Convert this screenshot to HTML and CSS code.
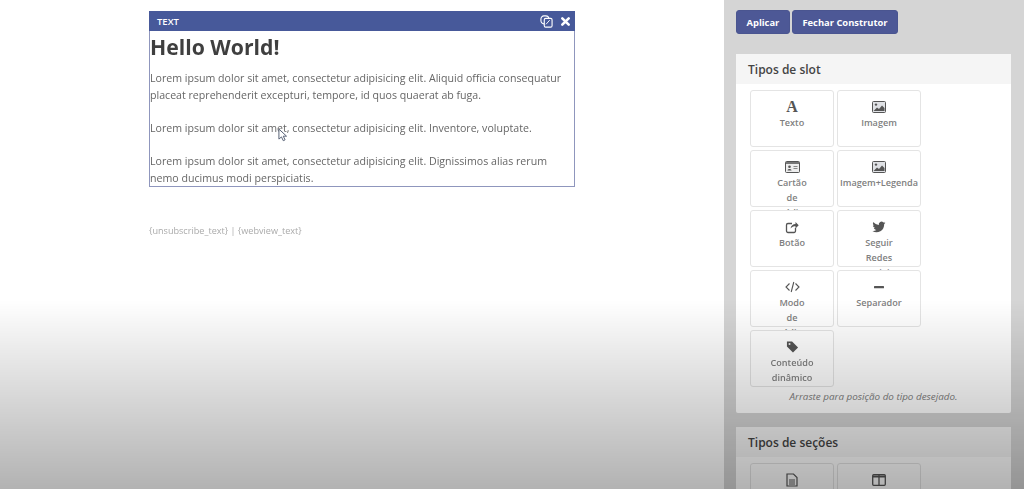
FILE: index.html
```html
<!DOCTYPE html>
<html lang="pt">
<head>
  <meta charset="UTF-8" />
  <title>Construtor de e-mail</title>
  <link rel="stylesheet" href="styles.css">
</head>
<body>

  <!-- Email canvas -->
  <main class="canvas">
    <div class="slot">
      <div class="slot-bar">
        <span class="slot-name">TEXT</span>
        <svg class="bar-icon" viewBox="0 0 14 14" width="13" height="13"><rect x="1" y="1" width="8.500" height="8.500" rx="3.200" fill="none" stroke="#fff" stroke-width="1.200"/><rect x="4.600" y="3.600" width="8.400" height="9.400" rx="1.500" fill="#47599a" stroke="#fff" stroke-width="1.200"/><path d="M6.500 10l4-4.500" stroke="#fff" stroke-width="1"/></svg>
        <svg class="bar-icon" viewBox="0 0 12 12" width="11" height="11"><path d="M2.500 2.500l7 7M9.500 2.500l-7 7" stroke="#fff" stroke-width="2.800" stroke-linecap="round"/></svg>
      </div>
      <div class="slot-body">
        <h1>Hello World!</h1>
        <p>Lorem ipsum dolor sit amet, consectetur adipisicing elit. Aliquid officia consequatur placeat reprehenderit excepturi, tempore, id quos quaerat ab fuga.</p>
        <p>Lorem ipsum dolor sit amet, consectetur adipisicing elit. Inventore, voluptate.</p>
        <p>Lorem ipsum dolor sit amet, consectetur adipisicing elit. Dignissimos alias rerum<br>nemo ducimus modi perspiciatis.</p>
      </div>
      <!-- Mouse pointer -->
      <svg class="pointer" viewBox="0 0 11 15" width="10" height="14"><path d="M1 1v11l2.800-2.400 2 4.200 2-1-2-4h3.600z" fill="#fff" stroke="#5a6478" stroke-width="1.100"/></svg>
    </div>
    <p class="email-links">{unsubscribe_text} | {webview_text}</p>
  </main>

  <!-- Builder sidebar -->
  <aside class="sidebar">
    <div class="actions">
      <button class="btn">Aplicar</button>
      <button class="btn">Fechar Construtor</button>
    </div>

    <section class="panel">
      <h2 class="panel-title">Tipos de slot</h2>
      <div class="panel-body">
        <div class="types">
          <div class="type">
            <span class="type-icon type-letter">A</span>
            Texto
          </div>
          <div class="type">
            <svg class="type-icon" viewBox="0 0 14 12" width="14" height="12"><rect x="0.500" y="0.500" width="13" height="11" rx="1" fill="#dfe1e5" stroke="#555" /><path d="M1.500 10l3.500-3.500 2 1.500 3-3.500 2.500 2.500v3z" fill="#555"/><circle cx="4" cy="3.600" r="1.200" fill="#555"/></svg>
            Imagem
          </div>
          <div class="type">
            <svg class="type-icon" viewBox="0 0 15 12" width="15" height="12"><rect x="0.500" y="0.500" width="14" height="11" rx="1" fill="#eee" stroke="#555"/><rect x="1" y="1" width="13" height="2" fill="#777"/><circle cx="4.500" cy="5.800" r="1.300" fill="#555"/><path d="M2.500 9.500c0-2 4-2 4 0z" fill="#555"/><path d="M8.500 5.500h4M8.500 7.500h4" stroke="#888"/></svg>
            Cartão de crédito
          </div>
          <div class="type">
            <svg class="type-icon" viewBox="0 0 14 12" width="14" height="12"><rect x="0.500" y="0.500" width="13" height="11" rx="1" fill="#dfe1e5" stroke="#555" /><path d="M1.500 10l3.500-3.500 2 1.500 3-3.500 2.500 2.500v3z" fill="#555"/><circle cx="4" cy="3.600" r="1.200" fill="#555"/></svg>
            Imagem+Legenda
          </div>
          <div class="type">
            <svg class="type-icon" viewBox="0 0 14 14" width="14" height="14"><path d="M10.500 8v3a1.500 1.500 0 0 1-1.500 1.500H3A1.500 1.500 0 0 1 1.500 11V5A1.500 1.500 0 0 1 3 3.500h4" fill="none" stroke="#555" stroke-width="1.300"/><path d="M5.500 8.500c.5-3 2.500-4.500 5-4.500V2l3.200 3.200-3.200 3.200V6.300c-2 0-3.500.5-5 2.200z" fill="#555"/></svg>
            Botão
          </div>
          <div class="type">
            <svg class="type-icon" viewBox="0 0 24 24" width="14" height="14"><path d="M23 4.900c-.8.400-1.700.600-2.600.700.900-.600 1.700-1.400 2-2.500-.900.500-1.900.900-2.900 1.100a4.600 4.600 0 0 0-7.800 4.200C7.900 8.200 4.500 6.400 2.200 3.600a4.600 4.600 0 0 0 1.400 6.100c-.700 0-1.400-.200-2-.600 0 2.300 1.600 4.200 3.700 4.600-.700.200-1.400.200-2.100.100.600 1.800 2.300 3.100 4.300 3.200A9.300 9.300 0 0 1 .700 18.900 13 13 0 0 0 20.800 7.300c.900-.600 1.600-1.400 2.200-2.400z" fill="#555"/></svg>
            Seguir Redes Sociais
          </div>
          <div class="type">
            <svg class="type-icon" viewBox="0 0 15 12" width="15" height="12"><path d="M4.500 2.500L1 6l3.500 3.500M10.500 2.500L14 6l-3.500 3.500M8.800 1L6.200 11" fill="none" stroke="#555" stroke-width="1.100"/></svg>
            Modo de Código
          </div>
          <div class="type">
            <svg class="type-icon" viewBox="0 0 12 12" width="12" height="12"><rect x="1" y="5" width="10" height="2.200" rx="0.500" fill="#555"/></svg>
            Separador
          </div>
          <div class="type">
            <svg class="type-icon" viewBox="0 0 14 14" width="13" height="13"><path d="M1 1h5.500L13 7.500 7.500 13 1 6.500z" fill="#555"/><circle cx="3.800" cy="3.800" r="1.100" fill="#eee"/></svg>
            Conteúdo dinâmico
          </div>
        </div>
        <p class="hint">Arraste para posição do tipo desejado.</p>
      </div>
    </section>

    <section class="panel">
      <h2 class="panel-title">Tipos de seções</h2>
      <div class="panel-body">
        <div class="types">
          <div class="type">
            <svg class="type-icon" viewBox="0 0 12 14" width="12" height="14"><path d="M1 1h6.500L11 4.500V13H1z" fill="none" stroke="#555" stroke-width="1.200"/><path d="M3 7h6M3 9h6M3 11h6" stroke="#555"/></svg>
          </div>
          <div class="type">
            <svg class="type-icon" viewBox="0 0 14 12" width="14" height="12"><rect x="0.700" y="0.700" width="12.600" height="10.600" rx="1" fill="none" stroke="#555" stroke-width="1.300"/><path d="M7 1v10" stroke="#555" stroke-width="1.300"/><path d="M1 1.500h12v2H1z" fill="#555"/></svg>
          </div>
        </div>
      </div>
    </section>
  </aside>

  <div class="shade"></div>
</body>
</html>
```

FILE: styles.css
```css
html, body {
  height: 100%;
}

body {
  margin: 0;
  display: flex;
  overflow: hidden;
  font-family: 'Open Sans', sans-serif;
  color: #555;
  background: #fff;
}

/* the reference is a soft video frame */
.canvas, .sidebar {
  filter: blur(0.45px);
}

.canvas {
  flex: 0 0 724px;
}

.slot {
  position: relative;
  width: 426px;
  margin: 11px auto 0;
  box-sizing: border-box;
  border: 1px solid #8f96bd;
  border-top: none;
}

.slot-bar {
  display: flex;
  align-items: center;
  gap: 7px;
  height: 20px;
  margin: 0 -1px;
  padding: 0 4px 0 8px;
  background: #47599a;
  color: #fff;
}

.slot-name {
  flex: 1;
  font-size: 9.500px;
  font-weight: 600;
}

.slot-body {
  height: 155px;
  color: #666;
}

.slot-body h1 {
  margin: 0;
  padding-top: 1px;
  font-size: 21.200px;
  line-height: 30px;
  font-weight: 700;
  color: #3f3f3f;
}

.slot-body p {
  margin: 0 0 16.700px;
  font-size: 10.620px;
  line-height: 16.700px;
}

.slot-body h1 + p {
  margin-top: 8px;
}

.pointer {
  position: absolute;
  left: 128px;
  top: 117px;
}

.email-links {
  width: 426px;
  margin: 38px auto 0;
  font-size: 9.100px;
  line-height: 12px;
  color: #aaa;
}

.sidebar {
  flex: 1;
  box-sizing: border-box;
  padding: 10px 13px 0 12px;
  background: #d5d5d5;
}

.actions {
  display: flex;
  gap: 2px;
  margin-bottom: 20px;
}

.btn {
  height: 24px;
  padding: 0 9.500px;
  border: 1px solid #4a5590;
  border-radius: 3px;
  background: #4d5896;
  color: #fff;
  font-family: inherit;
  font-size: 9.400px;
  font-weight: 700;
}

.panel {
  margin-bottom: 14px;
  background: #fff;
  border-radius: 2px;
}

.panel-title {
  margin: 0;
  height: 30px;
  padding-left: 12px;
  background: #f5f5f5;
  font-size: 12px;
  font-weight: 600;
  line-height: 31px;
  color: #444;
}

.panel-body {
  padding: 6px 0 9px 14px;
}

.types {
  display: grid;
  grid-template-columns: 84px 84px;
  grid-auto-rows: 57px;
  gap: 3px;
}

/* relative keeps a later card painted over the label that spills out of the one above */
.type {
  position: relative;
  box-sizing: border-box;
  padding-top: 9px;
  border: 1px solid #e4e4e4;
  border-radius: 3px;
  background: #fff;
  text-align: center;
  font-size: 9.100px;
  font-weight: 600;
  line-height: 15.200px;
  word-spacing: 100px;
  color: #808080;
}

.type-icon {
  display: block;
  height: 14px;
  margin: 0 auto 1px;
}

.type-letter {
  font-family: 'Liberation Serif', serif;
  font-size: 16px;
  font-weight: 700;
  line-height: 14px;
  color: #555;
}

.hint {
  margin: 2px 14px 0 0;
  font-size: 9.850px;
  font-style: italic;
  line-height: 15px;
  text-align: center;
  color: #808080;
}

/* dark fade over the bottom of the video frame */
.shade {
  position: fixed;
  left: 0;
  right: 0;
  bottom: 0;
  height: 189px;
  background: linear-gradient(rgba(0, 0, 0, 0), rgba(0, 0, 0, 0.3));
  pointer-events: none;
}
```
